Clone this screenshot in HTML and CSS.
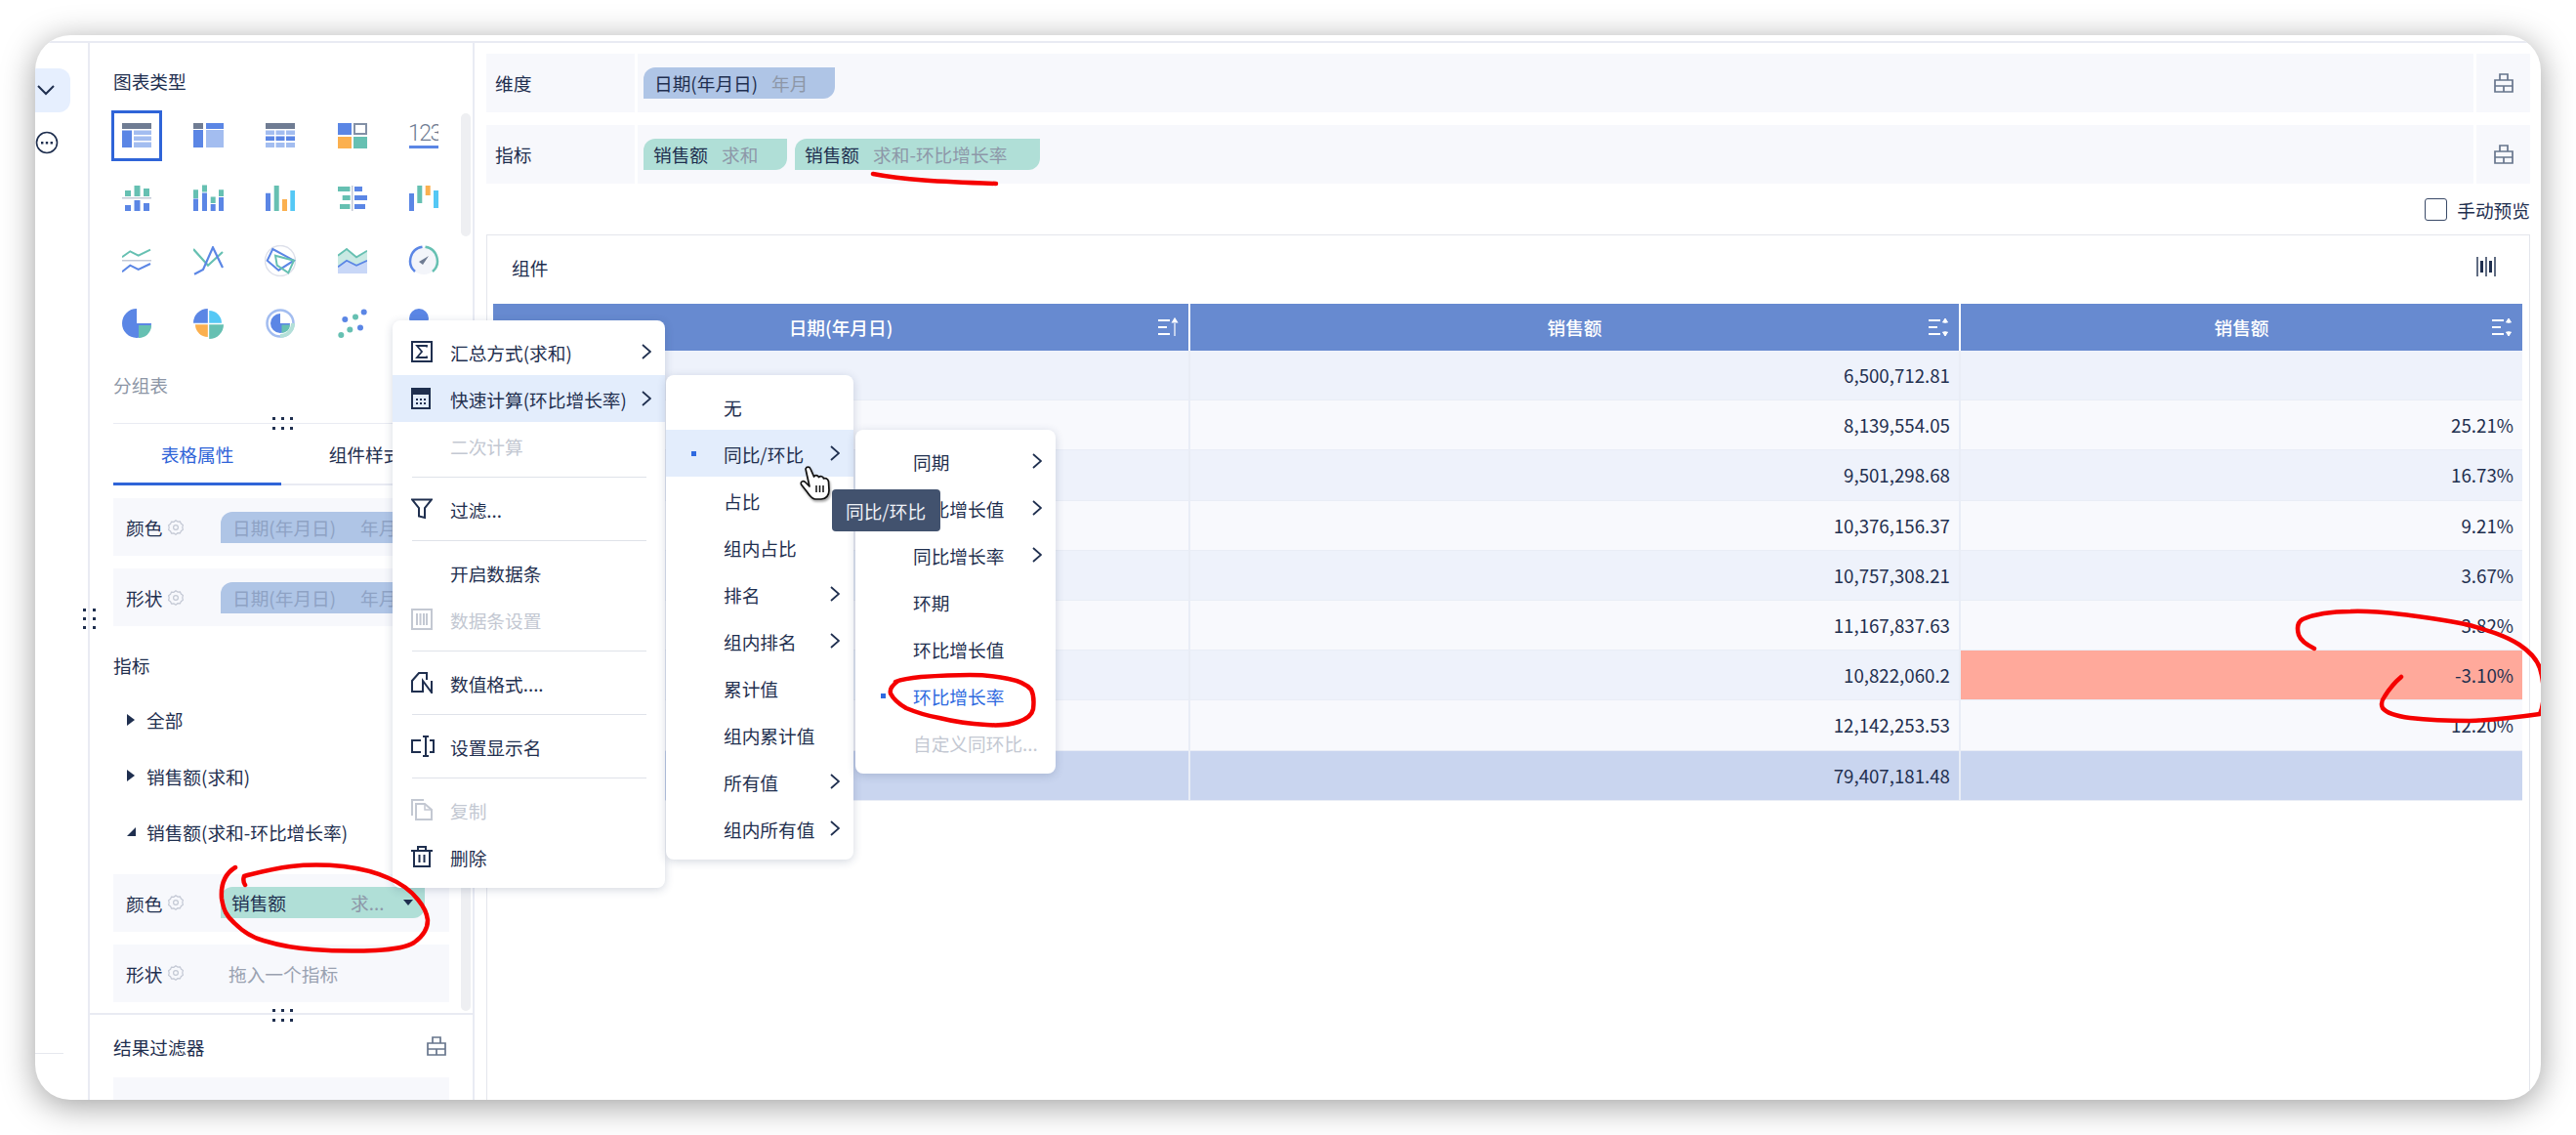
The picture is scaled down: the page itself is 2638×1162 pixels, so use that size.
FILE: index.html
```html
<!DOCTYPE html>
<html lang="zh-CN">
<head>
    <meta charset="UTF-8">
    <title>组件</title>
    <link rel="stylesheet" href="styles.css">
</head>
<body>
<svg class="defs" width="0" height="0">
    <symbol id="i-group" viewBox="0 0 20 20"><path d="M1 7h18v12H1zM6 7V1h8v6M1 13h18M10 13v6" fill="none" stroke="currentColor" stroke-width="1.7"/></symbol>
    <symbol id="i-gear" viewBox="0 0 16 16"><path d="M8 .8l2 1.3 2.4-.2 1 2.2 2 1.4-.6 2.4.6 2.4-2 1.4-1 2.2-2.4-.2L8 15.200l-2-1.300-2.400.2-1-2.200-2-1.400.6-2.400-.6-2.400 2-1.400 1-2.200 2.400.2z" fill="none" stroke="currentColor" stroke-width="1.200"/><circle cx="8" cy="8" r="2.400" fill="none" stroke="currentColor" stroke-width="1.200"/></symbol>
    <symbol id="i-chev" viewBox="0 0 10 16"><path d="M1 1l8 7-8 7" fill="none" stroke="currentColor" stroke-width="1.800"/></symbol>
    <symbol id="i-grip-h" viewBox="0 0 21 13"><path d="M0 0h3v3H0zM9 0h3v3H9zM18 0h3v3h-3zM0 10h3v3H0zM9 10h3v3H9zM18 10h3v3h-3z" fill="currentColor"/></symbol>
    <symbol id="i-grip-v" viewBox="0 0 13 21"><path d="M0 0h3v3H0zM10 0h3v3h-3zM0 9h3v3H0zM10 9h3v3h-3zM0 18h3v3H0zM10 18h3v3h-3z" fill="currentColor"/></symbol>
    <symbol id="i-sort" viewBox="0 0 22 20"><path d="M0 2h12v2H0zM0 9h9v2H0zM0 16h12v2H0z" fill="currentColor"/><path d="M17 6v-4M14.500 5L17 1l2.500 4zM17 14v4M14.500 15L17 19l2.500-4z" fill="currentColor" stroke="currentColor" stroke-width="1"/></symbol>
    <symbol id="i-sort-up" viewBox="0 0 22 20"><path d="M0 2h12v2H0zM0 9h9v2H0zM0 16h12v2H0z" fill="currentColor"/><path d="M17 6v13M14.500 5L17 1l2.500 4z" fill="currentColor" stroke="currentColor" stroke-width="1.200"/></symbol>
</svg>

<div class="window">
    <nav class="nav">
        <div class="nav-active">
            <svg width="18" height="11" viewBox="0 0 18 11"><path d="M1 1l8 8 8-8" fill="none" stroke="#1f2f4f" stroke-width="2"/></svg>
        </div>
        <svg class="nav-more" width="24" height="24" viewBox="0 0 24 24"><circle cx="12" cy="12" r="10.500" fill="none" stroke="#1f2f4f" stroke-width="1.600"/><path d="M6 11h2.400v2.400H6zM10.800 11h2.400v2.400h-2.400zM15.600 11H18v2.400h-2.400z" fill="#1f2f4f"/></svg>
        <div class="nav-line"></div>
    </nav>

    <aside class="side">
        <div class="side-scroll">
            <div class="side-title">图表类型</div>
            <div class="chart-grid">
                <div class="chart-cell selected"><svg width="30" height="30" viewBox="0 0 30 30"><path d="M0 2h30v6H0z" fill="#6f7c93"/><path d="M0 9.500h10V27H0z" fill="#5b86e5"/><path d="M12 9.500h18V14H12zM12 15.500h18V20H12zM12 21.500h18V27H12z" fill="#a3bdf0"/></svg></div>
                <div class="chart-cell"><svg width="31" height="30" viewBox="0 0 31 30"><path d="M0 2h10v6H0z" fill="#6f7c93"/><path d="M13 2h18v6H13zM0 9h10v18H0z" fill="#5b86e5"/><path d="M13 9h18v18H13z" fill="#a3bdf0"/></svg></div>
                <div class="chart-cell"><svg width="30" height="30" viewBox="0 0 30 30"><path d="M0 2h30v6H0z" fill="#6f7c93"/><path d="M0 9.500h9V14H0zM10.500 9.500h9V14h-9zM21 9.500h9V14h-9zM0 22h9v5H0zM10.500 22h9v5h-9zM21 22h9v5h-9z" fill="#a3bdf0"/><path d="M0 15.500h9V20H0zM10.500 15.500h9V20h-9zM21 15.500h9V20h-9z" fill="#5b86e5"/></svg></div>
                <div class="chart-cell"><svg width="30" height="30" viewBox="0 0 30 30"><path d="M0 2h14v12H0z" fill="#5b86e5"/><path d="M17 3h12v10H17z" fill="none" stroke="#8290a6" stroke-width="2"/><path d="M0 16h14v12H0z" fill="#fbb04f"/><path d="M16 16h14v12H16z" fill="#66c0b2"/></svg></div>
                <div class="chart-cell"><svg width="30" height="30" viewBox="0 0 30 30"><text class="num-icon" x="-1" y="20">123</text><path d="M0 25h30v3H0z" fill="#5b86e5"/></svg></div>

                <div class="chart-cell"><svg width="30" height="30" viewBox="0 0 30 30"><path d="M3 7h6v6H3zM12.500 2h6v11h-6zM22 5h6v8h-6z" fill="#66c0b2"/><path d="M0 14h30v1.500H0z" fill="#c3c9d6"/><path d="M3 22h6v6H3zM12.500 17h6v11h-6zM22 20h6v8h-6z" fill="#5b86e5"/></svg></div>
                <div class="chart-cell"><svg width="31" height="30" viewBox="0 0 31 30"><path d="M0 6.300h5V15H0zM9 1.500h5v7H9zM17.700 13.500h5V20h-5zM26 6.300h5V13h-5z" fill="#66c0b2"/><path d="M0 15.500h5V28H0zM9 9.500h5V28H9zM17.700 21h5v7h-5zM26 14h5v14h-5z" fill="#5b86e5"/></svg></div>
                <div class="chart-cell"><svg width="30" height="30" viewBox="0 0 30 30"><path d="M0 9.700h5V28H0z" fill="#5b86e5"/><path d="M8.700 2h5v26h-5z" fill="#66c0b2"/><path d="M17 16h5v12h-5z" fill="#fbb04f"/><path d="M25.300 7h5v21h-5z" fill="#55c8f5"/></svg></div>
                <div class="chart-cell"><svg width="30" height="30" viewBox="0 0 30 30"><path d="M0 3h12.500v5H0zM4.700 12h8v5h-8zM2 21h10.500v5H2z" fill="#66c0b2"/><path d="M14 2h1.500v26H14z" fill="#c3c9d6"/><path d="M17 3h8v5h-8zM17 12h13v5H17zM17 21h11v5H17z" fill="#5b86e5"/></svg></div>
                <div class="chart-cell"><svg width="30" height="30" viewBox="0 0 30 30"><path d="M0 10h5v18H0z" fill="#5b86e5"/><path d="M8.300 2h5v18h-5z" fill="#66c0b2"/><path d="M16.700 2h5v10h-5z" fill="#fbb04f"/><path d="M25 7h5v18h-5z" fill="#55c8f5"/></svg></div>

                <div class="chart-cell"><svg width="30" height="30" viewBox="0 0 30 30"><path d="M0 11.300l8.300-6 8.400 4.400L29 3.700" fill="none" stroke="#66c0b2" stroke-width="2"/><path d="M0 14h30v1.500H0z" fill="#c3c9d6"/><path d="M0 26.300l8.300-6.600 8.400 4.300L29 18" fill="none" stroke="#5b86e5" stroke-width="2"/></svg></div>
                <div class="chart-cell"><svg width="31" height="30" viewBox="0 0 31 30"><path d="M0 3l15 16.700L30 6" fill="none" stroke="#66c0b2" stroke-width="2.200"/><path d="M1 28.700l9-4.700 10-22.700L30 22" fill="none" stroke="#5b86e5" stroke-width="2.200"/></svg></div>
                <div class="chart-cell"><svg width="32" height="32" viewBox="0 0 32 32"><circle cx="16" cy="16" r="15.500" fill="none" stroke="#dde0ea" stroke-width="1.500"/><path d="M8.300 4L30 15.700 14.300 25.700 2.700 15.700z" fill="none" stroke="#5b86e5" stroke-width="2"/><path d="M11 10.700L30 15.700 24.300 28.300 12.700 20.700z" fill="none" stroke="#66c0b2" stroke-width="2"/></svg></div>
                <div class="chart-cell"><svg width="30" height="30" viewBox="0 0 30 30"><path d="M0 9.700L9 3l10 8.300L30 4.700V15l-11 4.700L9 14.700 0 21.300z" fill="#c9e9e3"/><path d="M0 21.300l9-6.600 10 5L30 14.700V28H0z" fill="#c8d7f7"/><path d="M0 9.700L9 3l10 8.300L30 4.700" fill="none" stroke="#66c0b2" stroke-width="1.800"/><path d="M0 21.300l9-6.600 10 5L30 14.700" fill="none" stroke="#5b86e5" stroke-width="1.800"/></svg></div>
                <div class="chart-cell"><svg width="32" height="32" viewBox="0 0 32 32"><circle cx="16" cy="16" r="14" fill="#f3f5fa"/><path d="M7 27A14.500 14.500 0 0 1 14.500 1.800" fill="none" stroke="#5b86e5" stroke-width="2.500"/><path d="M17.500 1.800A14.500 14.500 0 0 1 25 27" fill="none" stroke="#66c0b2" stroke-width="2.500"/><path d="M11 17l10-6-6 9z" fill="#6f7c93"/></svg></div>

                <div class="chart-cell"><svg width="30" height="30" viewBox="0 0 30 30"><path d="M15 0A15 15 0 1 0 30 15H15z" fill="#5b86e5"/><path d="M17 17h13A13 13 0 0 1 17 30z" fill="#66c0b2"/></svg></div>
                <div class="chart-cell"><svg width="31" height="31" viewBox="0 0 31 31"><path d="M14.800 14.800H0A14.800 14.800 0 0 1 14.800 0z" fill="#5b86e5"/><path d="M16.200 14.800V2A12.800 12.800 0 0 1 29 14.800z" fill="#55c8f5"/><path d="M14.800 16.200V29A12.800 12.800 0 0 1 2 16.200z" fill="#fbb04f"/><path d="M16.200 16.200H31A14.800 14.800 0 0 1 16.200 31z" fill="#66c0b2"/></svg></div>
                <div class="chart-cell"><svg width="30" height="30" viewBox="0 0 30 30"><circle cx="15" cy="15" r="13.500" fill="none" stroke="#a3bdf0" stroke-width="2.500"/><path d="M15 30a15 15 0 0 0 15-15h-4a11 11 0 0 1-11 11z" fill="#b3e0d8"/><path d="M15 5a10 10 0 1 0 10 10H15z" fill="#5b86e5"/><path d="M16.500 16.500H25a8.500 8.500 0 0 1-8.500 8.500z" fill="#66c0b2"/></svg></div>
                <div class="chart-cell"><svg width="30" height="30" viewBox="0 0 30 30"><g fill="#66c0b2"><circle cx="3.300" cy="27" r="3"/><circle cx="12.300" cy="21.500" r="3"/><circle cx="18" cy="8.500" r="3"/></g><g fill="#5b86e5"><circle cx="7.300" cy="11" r="3"/><circle cx="23" cy="19.500" r="3"/><circle cx="26.700" cy="3.500" r="3"/></g></svg></div>
                <div class="chart-cell"><svg width="30" height="30" viewBox="0 0 30 30"><circle cx="10" cy="10" r="10" fill="#5b86e5"/></svg></div>
            </div>
            <div class="side-sub">分组表</div>

            <div class="tabs">
                <div class="tab active">表格属性</div>
                <div class="tab">组件样式</div>
            </div>

            <div class="attr-row first">
                <span class="attr-label">颜色</span><svg class="gear"><use href="#i-gear"/></svg>
                <div class="pill pill-blue faded"><span>日期(年月日)</span><span class="pill-sub">年月</span></div>
            </div>
            <div class="attr-row">
                <span class="attr-label">形状</span><svg class="gear"><use href="#i-gear"/></svg>
                <div class="pill pill-blue faded"><span>日期(年月日)</span><span class="pill-sub">年月</span></div>
            </div>

            <div class="side-head">指标</div>
            <ul class="tree">
                <li><i class="tri"></i>全部</li>
                <li><i class="tri"></i>销售额(求和)</li>
                <li><i class="tri open"></i>销售额(求和-环比增长率)</li>
            </ul>

            <div class="attr-row">
                <span class="attr-label">颜色</span><svg class="gear"><use href="#i-gear"/></svg>
                <div class="pill pill-teal"><span>销售额</span><span class="pill-sub">求...</span><i class="caret"></i></div>
            </div>
            <div class="attr-row">
                <span class="attr-label">形状</span><svg class="gear"><use href="#i-gear"/></svg>
                <span class="attr-hint">拖入一个指标</span>
            </div>
            <div class="thumb thumb-a"></div>
            <div class="thumb thumb-b"></div>
        </div>

        <div class="filter">
            <div class="filter-head">结果过滤器<svg class="group-ico"><use href="#i-group"/></svg></div>
            <div class="filter-drop">拖入字段</div>
        </div>
    </aside>

    <main class="main">
        <div class="field-row">
            <div class="field-label">维度</div>
            <div class="field-body">
                <div class="pill pill-blue wide"><span>日期(年月日)</span><span class="pill-sub">年月</span></div>
            </div>
            <div class="field-end"><svg class="group-ico"><use href="#i-group"/></svg></div>
        </div>
        <div class="field-row second">
            <div class="field-label">指标</div>
            <div class="field-body">
                <div class="pill pill-teal chip-a"><span>销售额</span><span class="pill-sub">求和</span></div>
                <div class="pill pill-teal chip-b"><span>销售额</span><span class="pill-sub">求和-环比增长率</span></div>
            </div>
            <div class="field-end"><svg class="group-ico"><use href="#i-group"/></svg></div>
        </div>

        <div class="preview-row">
            <span class="check"></span>手动预览
        </div>

        <section class="comp">
            <div class="comp-head">
                <span>组件</span>
                <svg width="20" height="20" viewBox="0 0 20 20"><path d="M1 0v20M19 0v20M10 0v20" stroke="#1f2f4f" stroke-width="1.400"/><path d="M4 4h3v12H4zM13 4h3v12h-3z" fill="#1f2f4f"/></svg>
            </div>
            <div class="tbl">
                <div class="tbl-head">
                    <div class="th">日期(年月日)<svg class="sort"><use href="#i-sort-up"/></svg></div>
                    <div class="th">销售额<svg class="sort"><use href="#i-sort"/></svg></div>
                    <div class="th">销售额<svg class="sort"><use href="#i-sort"/></svg></div>
                </div>
                <div class="tr"><div class="td"></div><div class="td">6,500,712.81</div><div class="td"></div></div>
                <div class="tr"><div class="td"></div><div class="td">8,139,554.05</div><div class="td">25.21%</div></div>
                <div class="tr"><div class="td"></div><div class="td">9,501,298.68</div><div class="td">16.73%</div></div>
                <div class="tr"><div class="td"></div><div class="td">10,376,156.37</div><div class="td">9.21%</div></div>
                <div class="tr"><div class="td"></div><div class="td">10,757,308.21</div><div class="td">3.67%</div></div>
                <div class="tr"><div class="td"></div><div class="td">11,167,837.63</div><div class="td">3.82%</div></div>
                <div class="tr"><div class="td"></div><div class="td">10,822,060.2</div><div class="td warn">-3.10%</div></div>
                <div class="tr"><div class="td"></div><div class="td">12,142,253.53</div><div class="td">12.20%</div></div>
                <div class="tr total"><div class="td"></div><div class="td">79,407,181.48</div><div class="td"></div></div>
            </div>
        </section>
    </main>

    <svg class="grip grip-a"><use href="#i-grip-h"/></svg>
    <svg class="grip grip-b"><use href="#i-grip-h"/></svg>
    <svg class="grip grip-c"><use href="#i-grip-v"/></svg>

    <!-- context menu -->
    <div class="menu menu-main">
        <div class="menu-item">
            <span class="menu-ico"><svg width="22" height="22" viewBox="0 0 22 22"><path d="M1 1h20v20H1z" fill="none" stroke="currentColor" stroke-width="2"/><path d="M16 6.500V5H6l5 6-5 6h10v-1.500" fill="none" stroke="currentColor" stroke-width="1.800"/></svg></span>
            汇总方式(求和)<svg class="chev"><use href="#i-chev"/></svg>
        </div>
        <div class="menu-item on">
            <span class="menu-ico"><svg width="20" height="22" viewBox="0 0 20 22"><path d="M1 1h18v20H1z" fill="none" stroke="currentColor" stroke-width="2"/><path d="M2 2h16v5H2zM5 11h2v2H5zM9 11h2v2H9zM13 11h2v2h-2zM5 15h2v2H5zM9 15h2v2H9zM13 15h2v2h-2z" fill="currentColor"/></svg></span>
            快速计算(环比增长率)<svg class="chev"><use href="#i-chev"/></svg>
        </div>
        <div class="menu-item off"><span class="menu-ico"></span>二次计算</div>
        <div class="menu-line"></div>
        <div class="menu-item">
            <span class="menu-ico"><svg width="22" height="22" viewBox="0 0 22 22"><path d="M1 1.500h20l-7 8.500v10l-6-1.500V10z" fill="none" stroke="currentColor" stroke-width="2"/></svg></span>
            过滤...
        </div>
        <div class="menu-line"></div>
        <div class="menu-item"><span class="menu-ico"></span>开启数据条</div>
        <div class="menu-item off">
            <span class="menu-ico"><svg width="22" height="22" viewBox="0 0 22 22"><path d="M1 1h20v20H1z" fill="none" stroke="currentColor" stroke-width="2"/><path d="M5 5h2v12H5zM8.500 5h2v12h-2zM12 5h2v12h-2zM15 5h2v12h-2z" fill="currentColor"/></svg></span>
            数据条设置
        </div>
        <div class="menu-line"></div>
        <div class="menu-item">
            <span class="menu-ico"><svg width="23" height="22" viewBox="0 0 23 22"><path d="M11 20H1V9l7-8h8v7" fill="none" stroke="currentColor" stroke-width="2"/><path d="M12 21V9l9 12V9" fill="none" stroke="currentColor" stroke-width="2"/></svg></span>
            数值格式....
        </div>
        <div class="menu-line"></div>
        <div class="menu-item">
            <span class="menu-ico"><svg width="24" height="22" viewBox="0 0 24 22"><path d="M10 5H1v12h9M19 5h4v12h-4" fill="none" stroke="currentColor" stroke-width="2"/><path d="M15 1v20M12 1h6M12 21h6" fill="none" stroke="currentColor" stroke-width="2"/></svg></span>
            设置显示名
        </div>
        <div class="menu-line"></div>
        <div class="menu-item off">
            <span class="menu-ico"><svg width="22" height="22" viewBox="0 0 22 22"><path d="M1 17V1h12M5 21V5h9l7 6v10z" fill="none" stroke="currentColor" stroke-width="2"/><path d="M14 5v6h7" fill="none" stroke="currentColor" stroke-width="1.500"/></svg></span>
            复制
        </div>
        <div class="menu-item">
            <span class="menu-ico"><svg width="22" height="22" viewBox="0 0 22 22"><path d="M0 5h22M7 5V1h8v4M3 5v16h16V5M8.500 9v8M13.500 9v8" fill="none" stroke="currentColor" stroke-width="2"/></svg></span>
            删除
        </div>
    </div>

    <div class="menu menu-calc">
        <div class="menu-item"><span class="menu-ico"></span>无</div>
        <div class="menu-item on"><span class="menu-ico"><i class="dot"></i></span>同比/环比<svg class="chev"><use href="#i-chev"/></svg></div>
        <div class="menu-item"><span class="menu-ico"></span>占比</div>
        <div class="menu-item"><span class="menu-ico"></span>组内占比</div>
        <div class="menu-item"><span class="menu-ico"></span>排名<svg class="chev"><use href="#i-chev"/></svg></div>
        <div class="menu-item"><span class="menu-ico"></span>组内排名<svg class="chev"><use href="#i-chev"/></svg></div>
        <div class="menu-item"><span class="menu-ico"></span>累计值</div>
        <div class="menu-item"><span class="menu-ico"></span>组内累计值</div>
        <div class="menu-item"><span class="menu-ico"></span>所有值<svg class="chev"><use href="#i-chev"/></svg></div>
        <div class="menu-item"><span class="menu-ico"></span>组内所有值<svg class="chev"><use href="#i-chev"/></svg></div>
    </div>

    <div class="menu menu-rate">
        <div class="menu-item"><span class="menu-ico"></span>同期<svg class="chev"><use href="#i-chev"/></svg></div>
        <div class="menu-item"><span class="menu-ico"></span>同比增长值<svg class="chev"><use href="#i-chev"/></svg></div>
        <div class="menu-item"><span class="menu-ico"></span>同比增长率<svg class="chev"><use href="#i-chev"/></svg></div>
        <div class="menu-item"><span class="menu-ico"></span>环期</div>
        <div class="menu-item"><span class="menu-ico"></span>环比增长值</div>
        <div class="menu-item picked"><span class="menu-ico"><i class="dot"></i></span>环比增长率</div>
        <div class="menu-item off"><span class="menu-ico"></span>自定义同环比...</div>
    </div>

    <div class="tip">同比/环比</div>

    <svg class="hand" width="32" height="36" viewBox="0 0 32 36">
        <path d="M6 3C7 .5 10 .5 11 3l3.500 8C15.500 9 18.500 9 19.500 11.500 21 10 24 10.500 24.500 13 26 12 29 13 29.500 16L30 25C30 30 27 34 22 34H16C12 34 10 30 7 26L1.500 19C.5 16 3.500 14.500 5.500 16.500L10 21z" fill="#fff" stroke="#111" stroke-width="1.700" stroke-linejoin="round"/>
        <path d="M17 20v7M20.500 20v7M24 20v7" stroke="#111" stroke-width="1.500"/>
    </svg>

    <!-- hand drawn marks, in page coordinates -->
    <svg class="marks" viewBox="36 36 2566 1090">
        <path d="M894 178C925 184 960 186 1020 188"/>
        <path d="M241 888C228 896 226 908 227 920C229 932 232 938 240 945C250 955 258 960 270 963C290 969 305 971 320 972C345 974 365 974 385 973C402 972 416 970 424 965C434 958 438 950 438 942C437 933 433 927 428 921C420 911 410 904 398 899C385 893 368 889 352 887C332 885 315 885 298 887C280 889 265 893 250 897C249 900 249 903 251 906"/>
        <path d="M920 697C914 701 911 706 912 710C915 716 921 721 928 725C940 730 950 733 962 735C978 739 992 741 1010 742C1022 743 1034 742 1043 739C1052 736 1057 731 1058 726C1059 718 1059 712 1056 706C1051 700 1043 697 1033 695C1020 692 1008 691 993 691C975 691 958 692 943 693C933 694 925 695 917 698"/>
        <path d="M2370 664C2362 660 2356 656 2354 650C2352 643 2353 637 2358 634C2372 628 2390 626 2407 626C2430 625 2450 628 2468 630C2490 633 2510 636 2529 640C2550 646 2566 651 2580 660C2592 668 2598 675 2601 684C2606 700 2606 720 2601 731C2580 734 2555 737 2529 738C2505 738 2485 737 2468 735C2453 733 2444 730 2440 725C2438 721 2439 717 2442 713C2447 705 2453 698 2459 693"/>
    </svg>
</div>
</body>
</html>
```

FILE: styles.css
```css
* {
    box-sizing: border-box;
}
html, body {
    margin: 0;
    height: 100%;
    background: #fff;
    overflow: hidden;
}
body {
    padding: 36px;
    font-family: "Noto Sans CJK SC", "Noto Sans", sans-serif;
    font-size: 18.7px;
    color: #1f2f4f;
}
.defs {
    position: absolute;
}
.window {
    position: relative;
    display: flex;
    width: 2566px;
    height: 1090px;
    padding-top: 6px;
    background: #fff;
    border-radius: 36px;
    overflow: hidden;
    box-shadow: 0 6px 34px rgba(0, 0, 0, 0.38);
}

/* left nav */
.nav {
    display: flex;
    flex-direction: column;
    flex: 0 0 56px;
    padding-top: 26px;
    border-top: 2px solid #e9ebf3;
    border-right: 2px solid #e9ebf3;
}
.nav-active {
    display: flex;
    align-items: center;
    width: 36px;
    height: 45px;
    padding-left: 2px;
    background: #e6effe;
    border-radius: 0 12px 12px 0;
}
.nav-more {
    margin: 19px 0 0 0;
}
.nav-line {
    width: 29px;
    margin-top: auto;
    margin-bottom: 47px;
    border-top: 1px solid #e6e8ee;
}

/* sidebar */
.side {
    position: relative;
    flex: 0 0 393px;
    border-top: 2px solid #e9ebf3;
    border-right: 2px solid #e9ebf3;
}
.side-scroll {
    position: relative;
    height: 995px;
    padding: 26px 24px 0;
    border-bottom: 2px solid #e9ebf3;
}
.side-title {
    line-height: 26px;
}
.chart-grid {
    display: grid;
    grid-template-columns: repeat(5, 52px);
    grid-auto-rows: 52px;
    column-gap: 21.5px;
    row-gap: 12px;
    margin: 17px 0 0 -2px;
}
.chart-cell {
    display: flex;
    align-items: center;
    justify-content: center;
}
.chart-cell.selected {
    border: 3px solid #2f64d8;
}
.num-icon {
    font-family: Roboto, sans-serif;
    font-size: 23px;
    font-weight: 300;
    letter-spacing: -1.500px;
    fill: #6f7c93;
}
.side-sub {
    margin-top: 24px;
    line-height: 26px;
    color: #8d96a6;
}
.tabs {
    display: flex;
    margin-top: 26px;
    border-top: 1px solid #e9ebf3;
    border-bottom: 2px solid #e9ebf3;
    width: 344px;
}
.tab {
    flex: 1;
    height: 63px;
    margin-bottom: -2px;
    line-height: 62px;
    text-align: center;
}
.tab.active {
    color: #2f64d8;
    border-bottom: 3px solid #2f64d8;
}
.attr-row {
    display: flex;
    align-items: center;
    width: 344px;
    height: 59px;
    margin-top: 13px;
    padding-left: 13px;
    background: #f7f8fc;
}
.attr-label {
    width: 42px;
}
.gear {
    width: 16px;
    height: 16px;
    margin-left: 1px;
    color: #c3c8d4;
}
.attr-hint {
    margin-left: 46px;
    color: #9aa2b1;
}
.pill {
    display: flex;
    align-items: center;
    height: 32px;
    border-radius: 12px 0 12px 0;
    line-height: 32px;
    white-space: nowrap;
}
.attr-row .pill {
    position: relative;
    width: 209px;
    margin-left: 38px;
    padding-left: 11px;
}
.pill-blue {
    background: #afc5e6;
}
.pill-teal {
    background: #b0dfd7;
}
.pill-sub {
    margin-left: 14px;
    color: #8d97a8;
}
.pill.faded {
    color: #8ea2c4;
    padding-left: 12px;
}
.pill.faded .pill-sub {
    margin-left: 25px;
    color: #8ea2c4;
}
.attr-row .pill-teal .pill-sub {
    margin-left: 66px;
}
.caret {
    position: absolute;
    right: 12px;
    top: 13px;
    border: 5px solid transparent;
    border-top: 6px solid #1f2f4f;
}
.side-head {
    margin-top: 27px;
    padding-top: 0;
    line-height: 26px;
    position: relative;
}
.tree {
    margin: 14px 0 0;
    padding: 0;
    list-style: none;
}
.tree li {
    display: flex;
    align-items: center;
    height: 57.500px;
    padding-left: 14px;
}
.tri {
    width: 0;
    height: 0;
    margin-right: 12px;
    border-left: 8px solid #1f2f4f;
    border-top: 6px solid transparent;
    border-bottom: 6px solid transparent;
}
.tri.open {
    border: 0;
    border-right: 9px solid #1f2f4f;
    border-top: 9px solid transparent;
    margin-right: 11px;
}
.tree + .attr-row {
    margin-top: 14px;
}
.thumb {
    position: absolute;
    right: 2px;
    width: 10px;
    background: #eeeff2;
    border-radius: 5px;
}
.thumb-a {
    top: 72px;
    height: 126px;
}
.thumb-b {
    top: 400px;
    bottom: 2px;
}

/* result filter */
.filter {
    padding: 19px 24px 0;
}
.filter-head {
    display: flex;
    align-items: center;
    justify-content: space-between;
    width: 344px;
    height: 26px;
    padding-right: 3px;
}
.group-ico {
    width: 20px;
    height: 20px;
    color: #67758c;
}
.filter-drop {
    width: 344px;
    height: 80px;
    margin-top: 19px;
    padding-top: 18px;
    background: #f7f8fc;
    color: #9aa2b1;
    text-align: center;
}

/* main */
.main {
    flex: 1;
    min-width: 0;
    padding: 11px 11px 0 12px;
    border-top: 2px solid #e9ebf3;
    display: flex;
    flex-direction: column;
}
.field-row {
    display: flex;
    flex: 0 0 60px;
    gap: 3px;
    background: #fff;
}
.field-row.second {
    flex-basis: 59px;
    margin-top: 13px;
}
.field-label {
    flex: 0 0 152px;
    padding-left: 9px;
    line-height: 60px;
    background: #f7f8fc;
}
.field-body {
    display: flex;
    align-items: center;
    flex: 1;
    gap: 8px;
    padding-left: 6px;
    background: #f7f8fc;
}
.field-end {
    display: flex;
    align-items: center;
    justify-content: center;
    flex: 0 0 55px;
    background: #f7f8fc;
}
.field-body .pill {
    padding-left: 11px;
}
.pill.wide {
    width: 196px;
}
.pill.chip-a {
    width: 147px;
    padding-left: 10px;
}
.pill.chip-b {
    width: 251px;
    padding-left: 10px;
}
.preview-row {
    display: flex;
    align-items: center;
    justify-content: flex-end;
    flex: 0 0 52px;
    gap: 10px;
}
.check {
    width: 23px;
    height: 23px;
    border: 1.500px solid #3a4a68;
    border-radius: 3px;
}
.comp {
    flex: 1;
    padding: 0 7px 0 6px;
    border: 1px solid #e4e6ec;
    border-bottom: 0;
}
.comp-head {
    display: flex;
    align-items: center;
    justify-content: space-between;
    height: 70px;
    padding: 0 27px 6px 19px;
}

/* table */
.tbl-head, .tr {
    display: grid;
    grid-template-columns: 714px 789px 1fr;
}
.tbl-head {
    height: 48px;
    background: #678ad0;
    color: #fff;
}
.th {
    position: relative;
    line-height: 48px;
    text-align: center;
    font-weight: 500;
    border-right: 2px solid #fff;
}
.th:last-child {
    border-right: 0;
}
.sort {
    position: absolute;
    right: 9px;
    top: 14px;
    width: 22px;
    height: 20px;
}
.tr {
    height: 51.200px;
    background: #f8f9fd;
    border-bottom: 1px solid #e9edf6;
}
.tr:nth-child(even) {
    background: #eef2fb;
}
.td {
    padding: 0 9px 0 0;
    line-height: 50px;
    text-align: right;
    border-right: 2px solid #e9edf6;
}
.td:last-child {
    border-right: 0;
}
.td.warn {
    background: #ffa99b;
}
.tr.total {
    background: #c9d5ef;
}
.tr.total .td {
    border-right-color: #e9edf6;
}

/* things lying over the page */
.grip {
    position: absolute;
    color: #1f2f4f;
}
.grip-a, .grip-b {
    left: 243px;
    width: 21px;
    height: 13px;
}
.grip-a {
    top: 391px;
}
.grip-b {
    top: 997px;
}
.grip-c {
    left: 49px;
    top: 587px;
    width: 13px;
    height: 21px;
}
.menu {
    position: absolute;
    padding: 8px 0;
    background: #fff;
    border-radius: 8px;
    box-shadow: 0 2px 10px rgba(40, 60, 100, 0.2);
}
.menu-main {
    left: 366px;
    top: 292px;
    width: 279px;
}
.menu-calc {
    left: 646px;
    top: 348px;
    width: 192px;
}
.menu-rate {
    left: 840px;
    top: 404px;
    width: 205px;
}
.menu-item {
    display: flex;
    align-items: center;
    height: 48px;
    padding-left: 19px;
    padding-right: 14px;
    white-space: nowrap;
}
.menu-item.on {
    background: #e3edfc;
}
.menu-item.off {
    color: #c3c8d2;
}
.menu-item.picked {
    color: #2f6ae0;
}
.menu-ico {
    display: flex;
    align-items: center;
    flex: 0 0 40px;
}
.dot {
    width: 5px;
    height: 5px;
    margin-left: 7px;
    background: #2f6ae0;
}
.chev {
    width: 10px;
    height: 16px;
    margin-left: auto;
    flex: none;
}
.menu-line {
    height: 1px;
    margin: 8px 19px 8px 20px;
    background: #dfe2e9;
}
.tip {
    position: absolute;
    left: 816px;
    top: 465px;
    width: 111px;
    height: 43px;
    padding-left: 14px;
    line-height: 43px;
    color: #eef1f6;
    background: #42526e;
    border-radius: 4px;
    white-space: nowrap;
}
.hand {
    position: absolute;
    left: 783px;
    top: 441px;
    filter: drop-shadow(1px 2px 1px rgba(0, 0, 0, 0.35));
}
.marks {
    position: absolute;
    left: 0;
    top: 0;
    width: 2566px;
    height: 1090px;
    fill: none;
    stroke: #f50000;
    stroke-width: 4.500px;
    stroke-linecap: round;
    stroke-linejoin: round;
    pointer-events: none;
}
```
